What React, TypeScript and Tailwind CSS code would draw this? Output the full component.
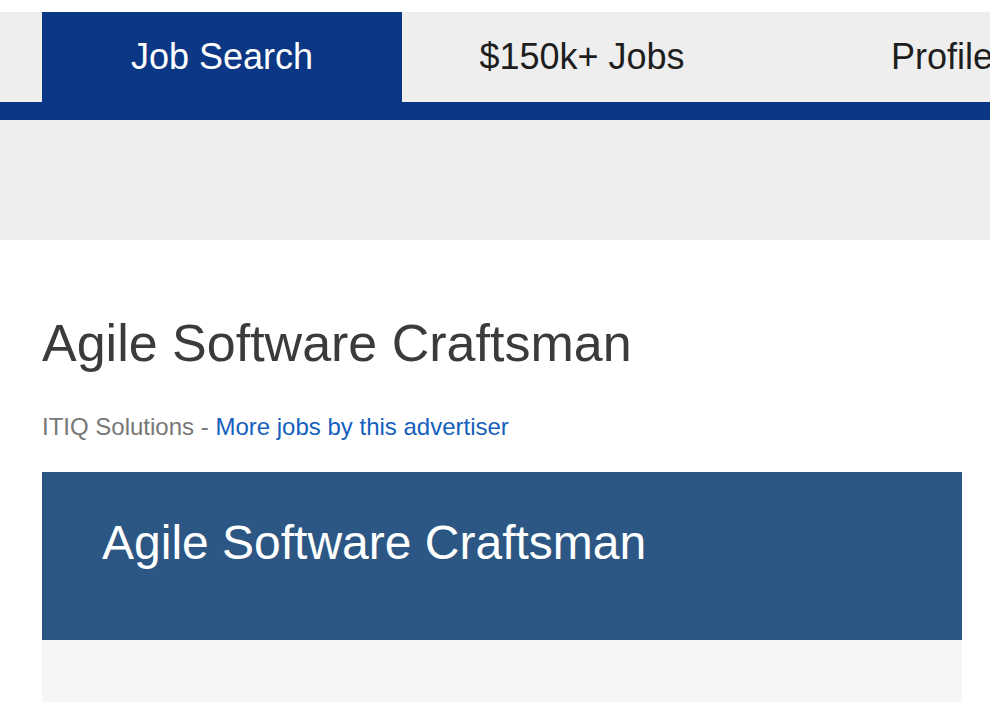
import React from 'react'

const tabs = [
    { label: 'Job Search', active: true },
    { label: '$150k+ Jobs', active: false },
    { label: 'Profile', active: false },
]

const App = () => {
    return (
        <div className="min-h-[702px] w-[990px] overflow-hidden bg-white font-['Liberation_Sans',Arial,sans-serif]">
            <nav className="mt-[12px]">
                <div className="flex h-[90px] bg-[#eeeeee] pl-[42px]">
                    {tabs.map((tab) => (
                        <div
                            key={tab.label}
                            className={`flex w-[360px] shrink-0 items-center justify-center text-[36px] leading-none ${
                                tab.active ? 'bg-[#0b3784] text-white' : 'text-[#1e1e1e]'
                            }`}
                        >
                            {tab.label}
                        </div>
                    ))}
                </div>
                <div className="h-[18px] bg-[#0b3784]" />
            </nav>

            <div className="h-[120px] bg-[#eeeeee]" />

            <main className="px-[42px] pr-[28px]">
                <h1 className="mt-[72px] text-[52px] leading-[62px] text-[#3b3b3b]">Agile Software Craftsman</h1>
                <p className="mt-[37px] text-[24px] leading-[32px] text-[#777777]">
                    ITIQ Solutions -{' '}
                    <a href="#" className="text-[#1560bd]">
                        More jobs by this advertiser
                    </a>
                </p>

                <div className="mt-[29px] h-[168px] bg-[#2c5784] px-[60px] pt-[43px]">
                    <h2 className="text-[48px] leading-[56px] text-white">Agile Software Craftsman</h2>
                </div>
                <div className="h-[80px] bg-[#f5f6f7]" />
            </main>
        </div>
    )
}

export default App
